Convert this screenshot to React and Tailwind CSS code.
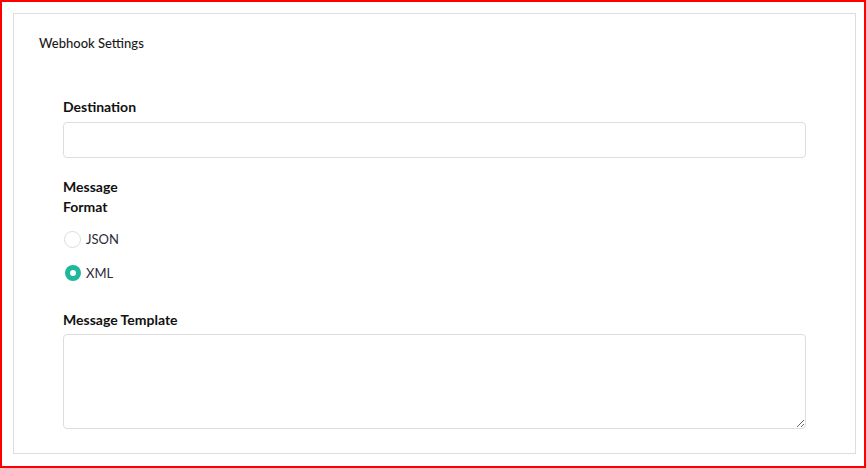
import React, { useState } from "react";

function Radio({ label, checked, onSelect }) {
  return (
    <label
      className="flex items-center gap-[5px] h-[18px] cursor-pointer"
      onClick={onSelect}
    >
      {checked ? (
        <span className="w-[16px] h-[16px] ml-[1px] rounded-full bg-[#1fb89a] flex items-center justify-center">
          <span className="w-[6px] h-[6px] rounded-full bg-white" />
        </span>
      ) : (
        <span className="w-[17px] h-[17px] rounded-full border border-[#dcdcdc] bg-white" />
      )}
      <span className="text-[13px] text-[#2a2a3a] leading-none">{label}</span>
    </label>
  );
}

export default function App() {
  const [format, setFormat] = useState("xml");

  return (
    <div
      className="h-[468px] border-2 border-[#ff0000] bg-white pt-[11px] pl-[11px] pr-[8px] box-border"
      style={{ fontFamily: "Lato, 'Open Sans', sans-serif" }}
    >
      {/* Card */}
      <div className="border border-[#dddddd] bg-white pt-[20px] pb-[24px]">
        <h2 className="pl-[25px] text-[13px] leading-[18px] text-[#1a1a1a] font-medium">
          Webhook Settings
        </h2>

        <div className="px-[49px] mt-[45px]">
          {/* Destination */}
          <label className="block text-[14px] leading-[20px] font-bold text-[#111]">
            Destination
          </label>
          <input
            type="text"
            className="mt-[5px] block w-full h-[36px] rounded-[4px] border border-[#dddddd] px-3 text-sm outline-none"
          />

          {/* Message Format */}
          <div className="mt-[19px] w-[70px] text-[14px] leading-[20px] font-bold text-[#111]">
            Message Format
          </div>
          <div className="mt-[13px] ml-[1px] flex flex-col gap-[16px]">
            <Radio
              label="JSON"
              checked={format === "json"}
              onSelect={() => setFormat("json")}
            />
            <Radio
              label="XML"
              checked={format === "xml"}
              onSelect={() => setFormat("xml")}
            />
          </div>

          {/* Message Template */}
          <label className="mt-[28px] block text-[14px] leading-[20px] font-bold text-[#111]">
            Message Template
          </label>
          <textarea className="mt-[4px] block w-full h-[95px] rounded-[4px] border border-[#dddddd] px-3 py-2 text-sm outline-none" />
        </div>
      </div>
    </div>
  );
}
